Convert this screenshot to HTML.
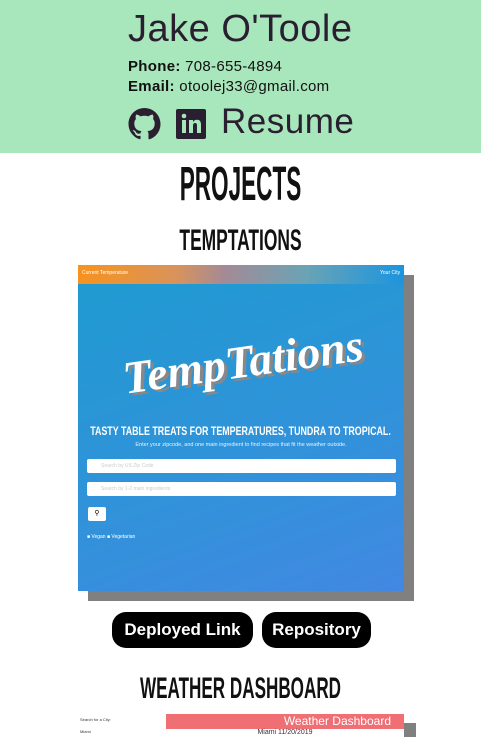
<!DOCTYPE html>
<html><head><style>
body{margin:0;width:481px;height:737px;overflow:hidden;background:#fff;font-family:"Liberation Sans",sans-serif;position:relative}
.hd{position:absolute;left:0;top:0;width:481px;height:153px;background:#a8e6bb;color:#2a1f30}
.a{position:absolute;white-space:nowrap}
.cond{font-weight:bold;color:#111;transform-origin:center;left:0;width:481px;text-align:center}
.btn{position:absolute;top:612px;height:36px;background:#000;color:#fff;border-radius:14px;font-size:17px;font-weight:bold;line-height:36px;text-align:center}
</style></head><body>
<div class="hd">
<div class="a" style="left:128px;top:8px;font-size:38px;letter-spacing:.5px">Jake O'Toole</div>
<div class="a" style="left:128px;top:58px;font-size:15px;color:#111;letter-spacing:.3px"><b style="font-weight:600">Phone:</b> 708-655-4894</div>
<div class="a" style="left:128px;top:78px;font-size:15px;color:#111;letter-spacing:.3px"><b style="font-weight:600">Email:</b> otoolej33@gmail.com</div>
<svg class="a" style="left:128px;top:108px" width="33" height="32" viewBox="0 0 16 16"><path fill="#2a1f30" d="M8 0C3.58 0 0 3.58 0 8c0 3.540 2.29 6.53 5.47 7.59.4.07.55-.17.55-.38v-1.33c-2.23.48-2.7-1.070-2.7-1.07-.36-.92-.89-1.170-.89-1.17-.73-.5.05-.49.05-.49.8.06 1.23.83 1.23.83.72 1.22 1.87.87 2.33.66.07-.52.28-.87.5-1.07-1.78-.2-3.64-.89-3.640-3.95 0-.87.31-1.590.82-2.15-.08-.2-.36-1.02.08-2.12 0 0 .67-.21 2.2.82a7.6 7.6 0 014 0c1.53-1.04 2.2-.82 2.2-.82.44 1.1.16 1.92.08 2.12.51.56.82 1.27.82 2.15 0 3.07-1.87 3.75-3.65 3.95.29.25.54.73.54 1.48v2.2c0 .21.15.46.55.38A8 8 0 0016 8c0-4.42-3.58-8-8-8z"/></svg>
<svg class="a" style="left:176px;top:109px" width="30" height="30" viewBox="0 0 30 30"><rect width="30" height="30" rx="2" fill="#2a1f30"/><rect x="6" y="11" width="4" height="13" fill="#a8e6bb"/><circle cx="8" cy="7" r="2.3" fill="#a8e6bb"/><path d="M13 11h4v2c1-1.6 2.4-2.3 4-2.3 3 0 4 2 4 5V24h-4v-7.5c0-1.6-.6-2.5-1.9-2.5-1.4 0-2.1 1-2.1 2.5V24h-4z" fill="#a8e6bb"/></svg>
<div class="a" style="left:221px;top:102px;font-size:35px;letter-spacing:.5px">Resume</div>
</div>
<div class="a cond" style="top:157px;font-size:48px;transform:scaleX(.47)">PROJECTS</div>
<div class="a cond" style="top:224px;font-size:30px;transform:scaleX(.58)">TEMPTATIONS</div>
<div class="a" style="left:88px;top:275px;width:326px;height:326px;background:#808080"></div>
<div class="a" style="left:78px;top:265px;width:326px;height:326px;background:linear-gradient(160deg,#1e9bd0,#3590dc 70%,#4288e2)"></div>
<div class="a" style="left:78px;top:265px;width:326px;height:19px;background:linear-gradient(90deg,#f7931e,#d9935a 30%,#a48a96 45%,#6aa3b5 70%,#1a95e0)"></div>
<div class="a" style="left:82px;top:270px;font-size:5px;color:#fff">Current Temperature</div>
<div class="a" style="left:380px;top:270px;font-size:5px;color:#fff">Your City</div>
<div class="a" style="left:122px;top:335px;font-size:46px;font-style:italic;font-family:'Liberation Serif',serif;font-weight:bold;color:#fff;text-shadow:3px 3px 0 #888;transform:rotate(-8deg)">TempTations</div>
<div class="a" style="left:0;width:481px;text-align:center;top:424px;font-size:12px;font-weight:bold;color:#fff;transform:scaleX(.74)">TASTY TABLE TREATS FOR TEMPERATURES, TUNDRA TO TROPICAL.</div>
<div class="a" style="left:78px;width:326px;text-align:center;top:442px;font-size:5.5px;color:#e8f4ff">Enter your zipcode, and one main ingredient to find recipes that fit the weather outside.</div>
<div class="a" style="left:87px;top:459px;width:309px;height:14px;background:#fff;border-radius:2px;font-size:5px;color:#ccc;line-height:14px;text-indent:14px">Search by US Zip Code</div>
<div class="a" style="left:87px;top:482px;width:309px;height:14px;background:#fff;border-radius:2px;font-size:5px;color:#ccc;line-height:14px;text-indent:14px">Search by 1-2 main ingredients</div>
<div class="a" style="left:88px;top:507px;width:18px;height:14px;background:#fff;border-radius:2px;font-size:7px;text-align:center;line-height:14px">&#9906;</div>
<div class="a" style="left:87px;top:534px;font-size:5px;color:#fff">&#9632; Vegan &#9632; Vegetarian</div>
<div class="btn" style="left:112px;width:141px">Deployed Link</div>
<div class="btn" style="left:262px;width:109px">Repository</div>
<div class="a cond" style="top:672px;font-size:30px;transform:scaleX(.57)">WEATHER DASHBOARD</div>
<div class="a" style="left:80px;top:717px;font-size:4px;color:#333">Search for a City:</div>
<div class="a" style="left:80px;top:729px;font-size:4px;color:#333">Miami</div>
<div class="a" style="left:404px;top:723px;width:12px;height:14px;background:#808080"></div>
<div class="a" style="left:166px;top:714px;width:238px;height:15px;background:#ef6f74;color:#fff;font-size:12px;line-height:15px;text-align:right"><span style="margin-right:13px">Weather Dashboard</span></div>
<div class="a" style="left:166px;top:729px;width:238px;height:8px;background:#fff;font-size:7px;color:#333;text-align:center">Miami 11/20/2019</div>
</body></html>
